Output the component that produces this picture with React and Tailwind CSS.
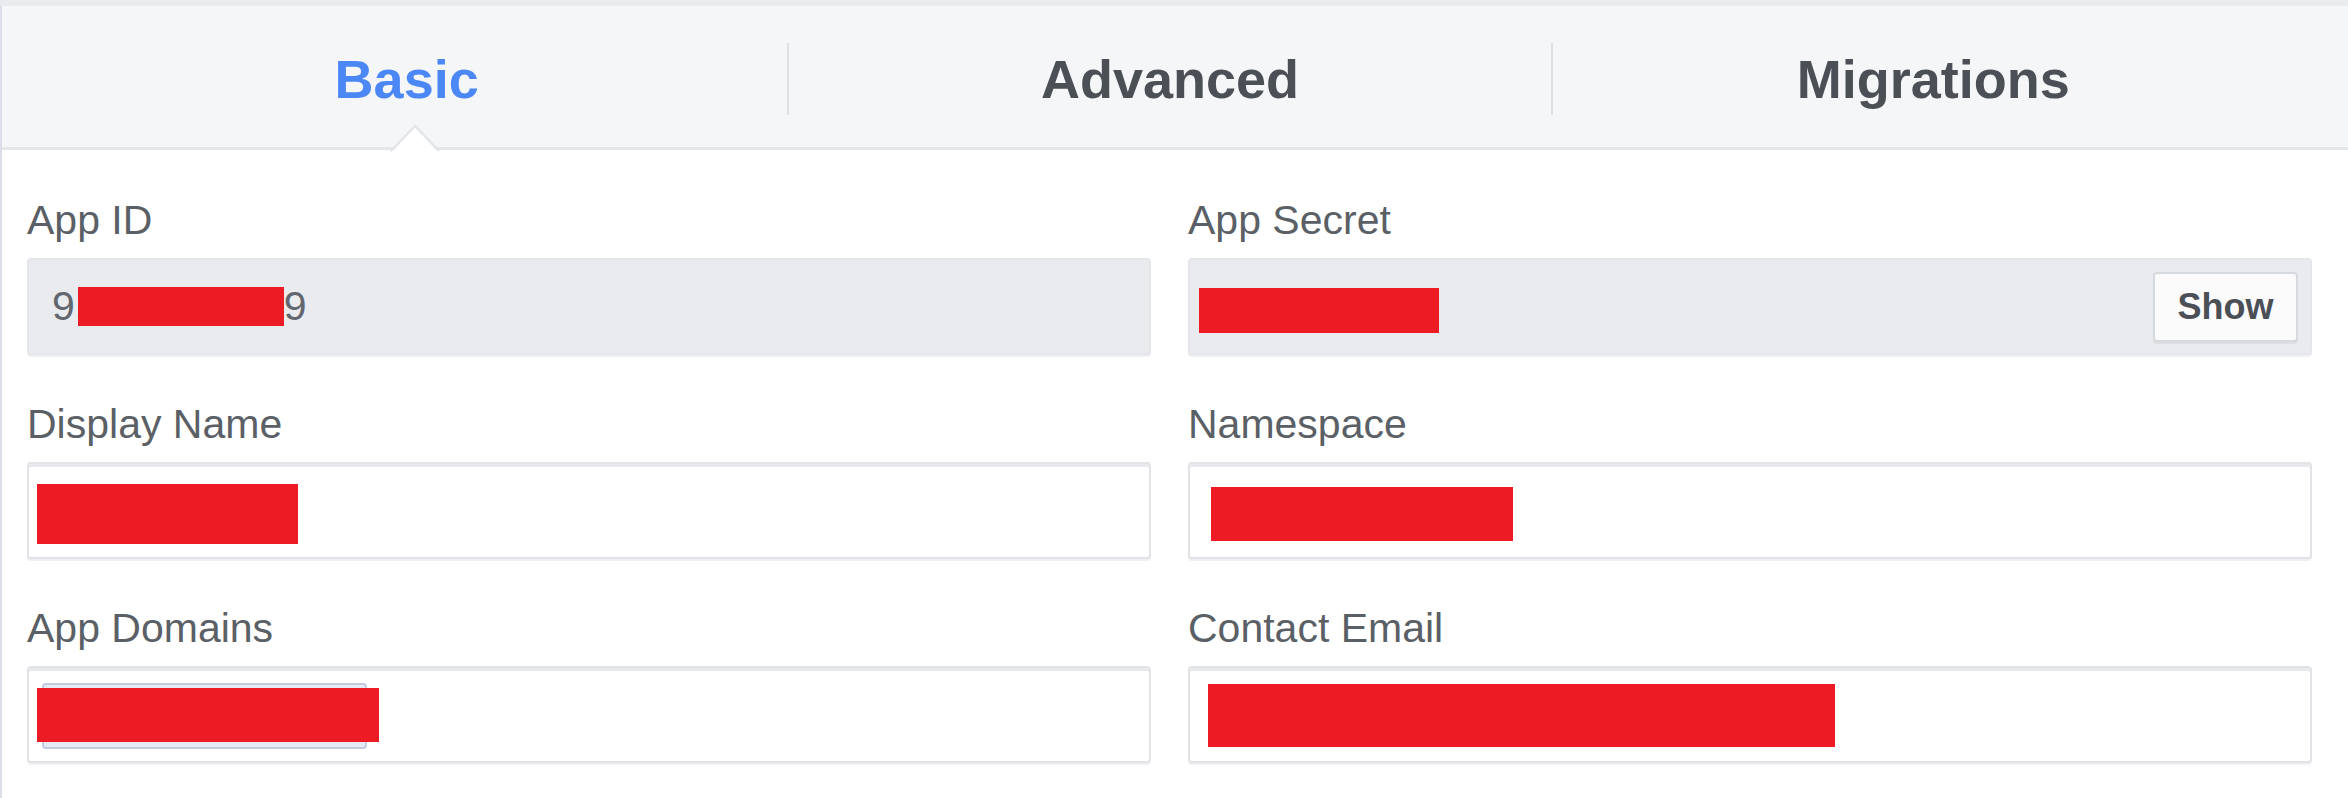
const font = "font-['Liberation_Sans',Arial,Helvetica,sans-serif]";

const Label = ({ children }) => (
  <div className="h-[41px] text-[41px] leading-[41px] text-[#5b5f66] whitespace-nowrap">
    {children}
  </div>
);

// white input box
const Field = ({ children, className = "" }) => (
  <div
    className={
      "mt-[17px] h-[97px] rounded-[4px] border-2 border-[#e2e3e6] bg-white shadow-[inset_0_3px_0_#e8e9ec,0_2px_0_#eff0f2] flex items-center " +
      className
    }
  >
    {children}
  </div>
);

// read-only grey box
const ReadOnly = ({ children, className = "" }) => (
  <div
    className={
      "mt-[17px] h-[97px] rounded-[4px] border-2 border-[#e4e6e9] bg-[#e9ebee] shadow-[0_2px_0_#eef0f2] flex items-center " +
      className
    }
  >
    {children}
  </div>
);

const Redact = ({ className }) => <div className={"bg-[#ed1c24] shrink-0 " + className} />;

const Tab = ({ label, active }) => (
  <div className="relative flex-1 h-full flex items-center justify-center">
    <span
      className={
        "text-[54px] leading-none font-bold " +
        (active ? "text-[#4c88f5]" : "text-[#4b4f56]")
      }
    >
      {label}
    </span>
    {active && (
      <svg
        className="absolute left-[364px] bottom-[-7px]"
        width="50"
        height="30"
        viewBox="0 0 50 30"
      >
        <polygon points="0,30 25,3 50,30" fill="#ffffff" />
        <polyline points="1,27 25,2 49,27" fill="none" stroke="#e3e5e8" strokeWidth="2.5" />
      </svg>
    )}
  </div>
);

export default function App() {
  return (
    <div className={"w-[2348px] h-[798px] overflow-hidden bg-white " + font}>
      <div className="h-[6px] bg-[#e9ebee]" />
      <div className="h-[792px] border-l-2 border-[#dcdee7]">
        {/* tabs */}
        <div className="relative h-[144px] bg-[#f5f6f8] border-b-[3px] border-[#e6e7ea] pl-[24px] pr-[34px] pt-[4px] flex items-center">
          <Tab label="Basic" active />
          <div className="w-[2px] h-[72px] bg-[#dfe1e5]" />
          <Tab label="Advanced" />
          <div className="w-[2px] h-[72px] bg-[#dfe1e5]" />
          <Tab label="Migrations" />
        </div>

        {/* form */}
        <div className="grid grid-cols-2 gap-x-[37px] gap-y-[49px] pl-[25px] pr-[36px] pt-[50px]">
          <div>
            <Label>App ID</Label>
            <ReadOnly className="pl-[23px] text-[41px] text-[#62666e]">
              <span className="leading-none">9</span>
              <Redact className="ml-[3px] w-[206px] h-[39px]" />
              <span className="leading-none">9</span>
            </ReadOnly>
          </div>
          <div>
            <Label>App Secret</Label>
            <ReadOnly className="pl-[9px] pr-[12px] justify-between">
              <Redact className="mt-[8px] w-[240px] h-[45px]" />
              <button className="w-[145px] h-[70px] rounded-[4px] border-2 border-[#d6d9dd] bg-[#fbfbfc] shadow-[0_2px_0_#dcdee2] text-[36px] font-bold text-[#4b4f56] leading-none">
                Show
              </button>
            </ReadOnly>
          </div>

          <div>
            <Label>Display Name</Label>
            <Field className="pl-[8px]">
              <Redact className="mt-[7px] w-[261px] h-[60px]" />
            </Field>
          </div>
          <div>
            <Label>Namespace</Label>
            <Field className="pl-[21px]">
              <Redact className="mt-[7px] w-[302px] h-[54px]" />
            </Field>
          </div>

          <div>
            <Label>App Domains</Label>
            <Field className="pl-[8px]">
              <div className="relative w-[342px] h-[54px]">
                {/* token pill behind the redaction */}
                <div className="absolute left-[5px] top-[-5px] w-[325px] h-[66px] rounded-[4px] border-2 border-[#c3cbdf] bg-[#e6eaf4]" />
                <Redact className="relative w-[342px] h-[54px]" />
              </div>
            </Field>
          </div>
          <div>
            <Label>Contact Email</Label>
            <Field className="pl-[18px]">
              <Redact className="mt-[2px] w-[627px] h-[63px]" />
            </Field>
          </div>
        </div>
      </div>
    </div>
  );
}
